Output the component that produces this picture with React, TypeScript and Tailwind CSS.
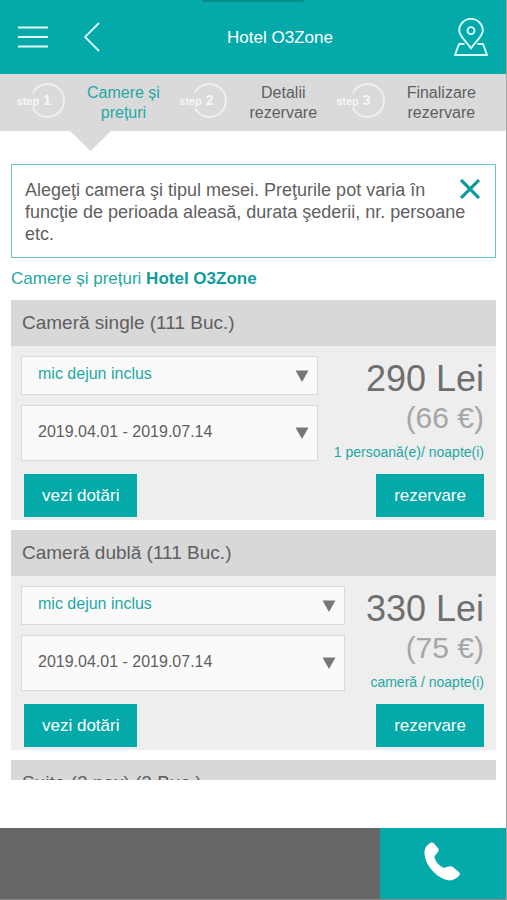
import { useState } from 'react';

type Offer = {
    meal: string;
    period: string;
    price: string;
    euro: string;
    unit: string;
};

type Room = {
    id: string;
    name: string;
    offer?: Offer;
};

const steps = [
    { nr: 1, label: 'Camere\u00a0și prețuri', active: true },
    { nr: 2, label: 'Detalii rezervare', active: false },
    { nr: 3, label: 'Finalizare rezervare', active: false },
];

const rooms: Room[] = [
    {
        id: 'single',
        name: 'Cameră single (111 Buc.)',
        offer: {
            meal: 'mic dejun inclus',
            period: '2019.04.01 - 2019.07.14',
            price: '290 Lei',
            euro: '(66 €)',
            unit: '1 persoană(e)/ noapte(i)',
        },
    },
    {
        id: 'dubla',
        name: 'Cameră dublă (111 Buc.)',
        offer: {
            meal: 'mic dejun inclus',
            period: '2019.04.01 - 2019.07.14',
            price: '330 Lei',
            euro: '(75 €)',
            unit: 'cameră / noapte(i)',
        },
    },
    { id: 'suite', name: 'Suite (2 pax) (2 Buc.)' },
];

const Arrow = () => (
    <svg className="pointer-events-none absolute top-1/2 right-[9px] -translate-y-1/2" width="14" height="12" viewBox="0 0 14 12">
        <path d="M0.5 0.5h13L7 12z" fill="#777" />
    </svg>
);

const RoomOffer = ({ name, offer }: { name: string; offer: Offer }) => (
    <div className="pt-[10px] pr-3 pb-[3px] pl-[10px]">
        <div className="flex gap-4">
            <div className="flex flex-1 flex-col gap-[10px]">
                <div className="relative">
                    <select
                        aria-label={`Masa ${name}`}
                        className="block h-[39px] w-full appearance-none border border-[#d9d9d9] bg-[#fafafa] pb-[3px] pl-4 text-[16px] text-[#1fa8a4] outline-none"
                    >
                        <option>{offer.meal}</option>
                    </select>
                    <Arrow />
                </div>
                <div className="relative">
                    <select
                        aria-label={`Perioada ${name}`}
                        className="block h-[56px] w-full appearance-none border border-[#d9d9d9] bg-[#fafafa] pb-[3px] pl-4 text-[16px] text-[#5f5f5f] outline-none"
                    >
                        <option>{offer.period}</option>
                    </select>
                    <Arrow />
                </div>
            </div>
            <div className="min-w-[123px] text-right whitespace-nowrap">
                <p className="text-[36px] leading-[46px] text-[#6f6f6f]">{offer.price}</p>
                <p className="text-[30px] leading-[32px] text-[#a6a6a6]">{offer.euro}</p>
                <p className="mt-[9px] text-[14px] leading-[18px] text-[#1fa8a4]">{offer.unit}</p>
            </div>
        </div>
        <div className="mt-[13px] flex justify-between pl-[3px]">
            <button className="h-[43px] bg-[#04a9a9] px-[18px] text-[17px] text-white">vezi dotări</button>
            <button className="h-[43px] bg-[#04a9a9] px-[18px] text-[17px] text-white">rezervare</button>
        </div>
    </div>
);

const App = () => {
    const [showInfo, setShowInfo] = useState(true);

    return (
        <div className="flex h-screen flex-col border-r border-[#a3a3a3] bg-white font-['Liberation_Sans',Arial,sans-serif]">
            <header className="relative flex h-[74px] shrink-0 items-center justify-between bg-[#04a9a9] px-[18px] text-white">
                <div className="absolute top-0 left-1/2 h-[2px] w-[101px] -translate-x-1/2 bg-[#068a8e]" />
                <div className="flex items-center gap-9">
                    <button aria-label="Meniu">
                        <svg width="30" height="30" viewBox="0 0 30 30" stroke="#e4ffff" strokeWidth="2">
                            <path d="M0 5.5h30M0 15h30M0 24.5h30" />
                        </svg>
                    </button>
                    <button aria-label="Înapoi" className="w-[22px]">
                        <svg width="16" height="30" viewBox="0 0 16 30" fill="none" stroke="#d8ffff" strokeWidth="1.8">
                            <path d="M15 1L1 15l14 14" />
                        </svg>
                    </button>
                </div>
                <h1 className="pt-[2px] text-[17px] leading-[22px]">Hotel O3Zone</h1>
                <button aria-label="Hartă">
                    <svg width="34" height="38" viewBox="0 0 34 38" fill="none" stroke="#d8ffff" strokeWidth="1.9" strokeLinejoin="round">
                        <path d="M17 30.500C13.500 24.500 5.200 18.600 5.200 12.600a11.800 11.800 0 0 1 23.600 0C28.800 18.600 20.500 24.500 17 30.500z" />
                        <circle cx="17" cy="12.600" r="3.500" />
                        <path d="M10.500 26H5L1 37h32l-4-11h-5.500" />
                    </svg>
                </button>
            </header>

            <nav className="relative flex h-[57px] shrink-0 justify-between bg-[#dadada] px-[30px]">
                {steps.map((step) => (
                    <a key={step.nr} href={`#step-${step.nr}`} className="flex items-center gap-[22px]">
                        <span className="mb-1 flex size-[35px] items-center justify-end rounded-full border-2 border-[#f0f0f0] pr-3">
                            <span className="flex items-baseline gap-1 bg-[#dadada] font-bold whitespace-nowrap text-[#f7f7f7]">
                                <span className="text-[11px] leading-[14px]">step</span>
                                <span className="text-[14px] leading-[14px]">{step.nr}</span>
                            </span>
                        </span>
                        <span className={`w-min text-center text-[16px] leading-[20px] ${step.active ? 'text-[#1fa8a4]' : 'text-[#5f5f5f]'}`}>
                            {step.label}
                        </span>
                    </a>
                ))}
                <svg className="absolute top-full left-[70px]" width="41" height="20" viewBox="0 0 41 20">
                    <path d="M0 0h41L20.5 20z" fill="#dadada" />
                </svg>
            </nav>

            <main className="mb-12 min-h-0 flex-1 overflow-y-auto pt-[33px] pr-[10px] pl-[11px] [scrollbar-width:none]">
                {showInfo && (
                    <div className="border border-[#6cc4c4] pt-[14px] pr-[15px] pb-[12px] pl-[13px]">
                        <button aria-label="Închide" className="float-right" onClick={() => setShowInfo(false)}>
                            <svg width="20" height="20" viewBox="0 0 20 20" stroke="#0c9c9e" strokeWidth="3.2">
                                <path d="M1 1l18 18M19 1L1 19" />
                            </svg>
                        </button>
                        <p className="text-[18px] leading-[22px] text-[#5f5f5f]">
                            Alegeţi camera şi tipul mesei. Preţurile pot varia în funcţie de perioada aleasă, durata şederii, nr. persoane etc.
                        </p>
                    </div>
                )}
                <p className="text-[17px] leading-[42px] text-[#1fa8a4]">
                    Camere și prețuri <strong className="text-[#0c9c9e]">Hotel O3Zone</strong>
                </p>
                <div className="flex flex-col gap-[10px]">
                    {rooms.map((room) => (
                        <section key={room.id} className="bg-[#eeeeee]">
                            <h2 className="bg-[#d8d8d8] px-[11px] text-[19px] leading-[46px] text-[#5f5f5f]">{room.name}</h2>
                            {room.offer && <RoomOffer name={room.name} offer={room.offer} />}
                        </section>
                    ))}
                </div>
            </main>

            <footer className="flex h-[72px] shrink-0 border-b border-[#8a8a8a] bg-[#666666]">
                <a href="tel:+40" aria-label="Sună" className="ml-auto flex w-1/4 items-center justify-center bg-[#04a9a9] pb-1">
                    <svg width="37" height="39" viewBox="32 25 110 117" fill="#fff">
                        <path d="M40 36L50 28Q57 24 63 31L74 44Q78 50 73 56L64 66Q62 70 64 75Q72 94 90 102Q94 103 97 101L108 98Q114 97 119 101L136 115Q142 120 137 126L128 134Q118 142 104 140Q80 136 58 113Q36 90 33 62Q31 44 40 36Z" />
                    </svg>
                </a>
            </footer>
        </div>
    );
};

export default App;
